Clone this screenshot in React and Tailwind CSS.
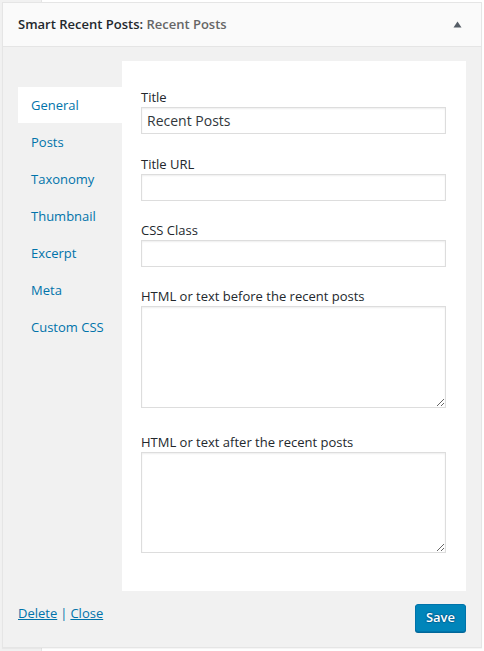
import React from 'react'

const tabs = ['General', 'Posts', 'Taxonomy', 'Thumbnail', 'Excerpt', 'Meta', 'Custom CSS']

const font = { fontFamily: "'Open Sans', 'Noto Sans', sans-serif" }

function Field({ label, children, gap }) {
  return (
    <div className={gap}>
      <label className="block h-[20px] text-[13px] leading-[20px] text-[#23282d]">{label}</label>
      {children}
    </div>
  )
}

export default function App() {
  return (
    <div className="relative w-[484px] h-[651px] bg-white overflow-hidden" style={font}>
      {/* page behind the widget */}
      <div className="absolute inset-y-0 left-0 w-[42px] bg-[#f1f1f1] border-r border-[#e5e5e5]" />

      <div className="relative ml-[2px] mt-[2px] w-[480px] h-[646px] border border-[#e5e5e5] bg-[#f1f1f1] shadow-[0_1px_1px_rgba(0,0,0,0.04)] flex flex-col">
        <div className="h-[44px] shrink-0 bg-[#fafafa] border-b border-[#e5e5e5] flex items-center justify-between pl-[15px] pr-[19px]">
          <h3 className="text-[13px] font-semibold text-[#23282d] leading-none">
            Smart Recent Posts: <span className="text-[#666]">Recent Posts</span>
          </h3>
          <svg width="9" height="7" viewBox="0 0 9 7">
            <polygon points="4.5,0.5 8.5,6.5 0.5,6.5" fill="#555d66" />
          </svg>
        </div>

        <div className="flex-1 flex flex-col px-[15px] pt-[14px]">
          <div className="flex h-[530px]">
            <ul className="w-[104px] shrink-0 pt-[26px] flex flex-col gap-[1px]">
              {tabs.map((t, i) => (
                <li
                  key={t}
                  className={`h-[36px] flex items-center pl-[13px] pt-[2px] text-[13px] text-[#0073aa] ${i === 0 ? 'bg-white' : ''}`}
                >
                  {t}
                </li>
              ))}
            </ul>

            <div className="flex-1 bg-white pl-[19px] pr-[20px] pt-[26px]">
              <Field label="Title">
                <input
                  defaultValue="Recent Posts"
                  className="block w-full h-[27px] border border-[#ddd] shadow-[inset_0_1px_2px_rgba(0,0,0,0.07)] px-[5px] text-[14px] text-[#32373c] outline-none"
                  style={font}
                />
              </Field>
              <Field label="Title URL" gap="mt-[20px]">
                <input className="block w-full h-[27px] border border-[#ddd] shadow-[inset_0_1px_2px_rgba(0,0,0,0.07)] px-[5px] text-[14px] outline-none" />
              </Field>
              <Field label="CSS Class" gap="mt-[19px]">
                <input className="block w-full h-[27px] border border-[#ddd] shadow-[inset_0_1px_2px_rgba(0,0,0,0.07)] px-[5px] text-[14px] outline-none" />
              </Field>
              <Field label="HTML or text before the recent posts" gap="mt-[19px]">
                <textarea className="block w-full h-[102px] border border-[#ddd] shadow-[inset_0_1px_2px_rgba(0,0,0,0.07)] p-[5px] text-[14px] outline-none resize" />
              </Field>
              <Field label="HTML or text after the recent posts" gap="mt-[24px]">
                <textarea className="block w-full h-[101px] border border-[#ddd] shadow-[inset_0_1px_2px_rgba(0,0,0,0.07)] p-[5px] text-[14px] outline-none resize" />
              </Field>
            </div>
          </div>

          <div className="flex items-start justify-between pt-[13px]">
            <div className="text-[13px] text-[#0073aa] leading-[18px]">
              <a href="#" className="underline">Delete</a>
              <span className="mx-[3px]">|</span>
              <a href="#" className="underline">Close</a>
            </div>
            <button className="h-[28px] px-[10px] rounded-[3px] border border-[#0073aa] bg-[#0085ba] text-white text-[13px] font-semibold shadow-[0_1px_0_#006799] [text-shadow:0_-1px_1px_#006799,1px_0_1px_#006799,0_1px_1px_#006799,-1px_0_1px_#006799]">
              Save
            </button>
          </div>
        </div>
      </div>
    </div>
  )
}
